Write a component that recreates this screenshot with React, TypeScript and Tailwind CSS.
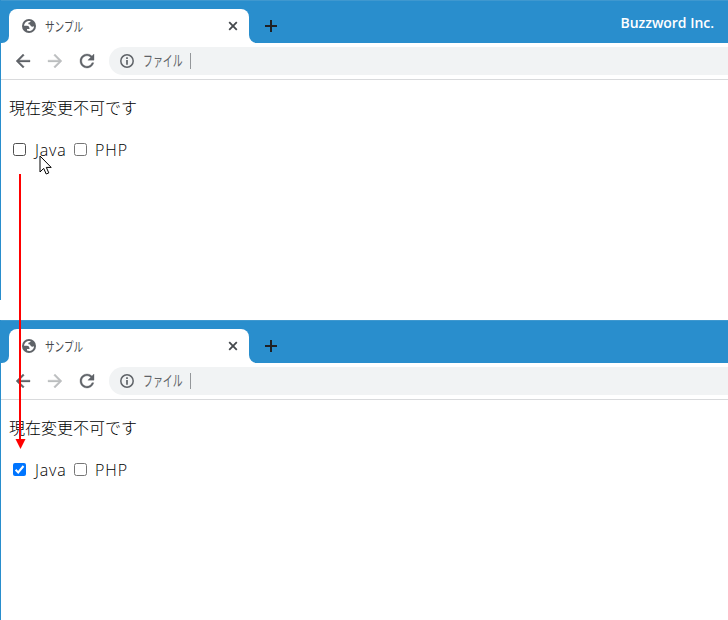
function Globe() {
  return (
    <svg width="14" height="14" viewBox="0 0 14 14" className="shrink-0">
      <circle cx="7" cy="7" r="7" fill="#5f6368" />
      <path
        d="M2 6.7 C2.1 4.4 3.7 2.4 6 1.9 L8.6 2.1 C8.4 3.2 7.7 3.5 6.4 3.7 V5.2 C8 5.2 8.5 5.8 8.7 7 C9.8 7.9 11 7.8 12 7.2 C12 9.7 10 11.9 7.2 12 L5 11.6 V10 H7.6 C7.5 7.9 6.6 6.7 5 6.7 Z"
        fill="#fff"
      />
    </svg>
  );
}

function BackIcon() {
  return (
    <svg width="14" height="14" viewBox="4 4 16 16" className="shrink-0 overflow-visible" fill="#5f6368" stroke="#5f6368" strokeWidth="0.4">
      <path d="M20 11H7.83l5.59-5.59L12 4l-8 8 8 8 1.41-1.41L7.83 13H20v-2z" />
    </svg>
  );
}

function ForwardIcon() {
  return (
    <svg width="14" height="14" viewBox="4 4 16 16" className="shrink-0 overflow-visible" fill="#bcbec0" stroke="#bcbec0" strokeWidth="0.4">
      <path d="M12 4l-1.41 1.41L16.17 11H4v2h12.17l-5.58 5.59L12 20l8-8z" />
    </svg>
  );
}

function ReloadIcon() {
  return (
    <svg width="14" height="14" viewBox="4 4 16 16" className="shrink-0 overflow-visible" fill="#5f6368" stroke="#5f6368" strokeWidth="0.4">
      <path d="M17.65 6.35C16.2 4.9 14.21 4 12 4c-4.42 0-7.99 3.58-7.99 8s3.57 8 7.99 8c3.73 0 6.84-2.55 7.73-6h-2.08c-.82 2.33-3.04 4-5.65 4-3.31 0-6-2.69-6-6s2.69-6 6-6c1.66 0 3.14.69 4.22 1.78L13 11h7V4l-2.35 2.35z" />
    </svg>
  );
}

function InfoIcon() {
  return (
    <svg width="14" height="14" viewBox="0 0 14 14" className="shrink-0">
      <circle cx="7" cy="7" r="6.2" fill="none" stroke="#5f6368" strokeWidth="1.5" />
      <path d="M7 3.3V4.9 M7 6.1V10.7" stroke="#5f6368" strokeWidth="1.7" />
    </svg>
  );
}

function TabStrip({ brand }: { brand?: string }) {
  return (
    <div className="flex h-[43px] border-t border-[#3f98cf] bg-[#298ecd]">
      <div className="flex w-2 shrink-0 bg-white">
        <div className="w-full rounded-br-[7px] bg-[#298ecd]" />
      </div>
      <div className="mt-2 flex w-60 shrink-0 items-center rounded-t-[8px] bg-white pl-[13px] pr-[11px]">
        <Globe />
        <span className="ml-[9px] w-[38px] whitespace-nowrap text-[13px] leading-4 text-[#45494d]">
          <span className="inline-block origin-left scale-x-[0.74]">サンプル</span>
        </span>
        <svg width="10" height="10" viewBox="0 0 10 10" className="ml-auto">
          <path d="M1.2 1.2 8.8 8.8 M8.8 1.2 1.2 8.8" stroke="#45494d" strokeWidth="1.8" />
        </svg>
      </div>
      <div className="flex grow bg-white">
        <div className="flex grow items-center justify-between rounded-bl-[8px] bg-[#298ecd] pl-4 pr-[14px]">
          <svg width="12" height="12" viewBox="0 0 12 12" className="mt-[8px]">
            <path d="M6 0V12 M0 6H12" stroke="#202124" strokeWidth="2" />
          </svg>
          {brand && (
            <span className="mt-[2px] whitespace-nowrap font-['Open_Sans','Noto_Sans',sans-serif] text-[14px] font-semibold leading-5 tracking-[-0.03px] text-white">
              {brand}
            </span>
          )}
        </div>
      </div>
    </div>
  );
}

function Toolbar() {
  return (
    <div className="flex h-[37px] items-center border-b border-[#d9dadc] pl-[15px]">
      <BackIcon />
      <span className="ml-[18px] flex">
        <ForwardIcon />
      </span>
      <span className="ml-[18px] flex">
        <ReloadIcon />
      </span>
      <div className="ml-[15px] flex h-7 grow items-center rounded-l-full bg-[#f1f3f4] pl-[11px]">
        <InfoIcon />
        <span className="-mt-[2px] ml-[9px] w-[40px] whitespace-nowrap text-[15px] leading-5 text-[#5f6368]">
          <span className="inline-block origin-left scale-x-[0.66]">ファイル</span>
        </span>
        <span className="ml-[7px] h-4 w-px bg-[#94979a]" />
      </div>
    </div>
  );
}

function Box({ checked, dark }: { checked?: boolean; dark?: boolean }) {
  if (checked) {
    return (
      <svg width="13" height="13" viewBox="0 0 13 13" className="shrink-0">
        <rect width="13" height="13" rx="2" fill="#0075ff" />
        <path d="M2.6 6.8 5.2 9.4 10.5 3" fill="none" stroke="#fff" strokeWidth="2" />
      </svg>
    );
  }
  return (
    <span
      className={`size-[13px] shrink-0 rounded-[2.5px] border bg-white ${dark ? "border-[#4f4f4f]" : "border-[#767676]"}`}
    />
  );
}

function BrowserWindow({ brand, javaChecked }: { brand?: string; javaChecked?: boolean }) {
  return (
    <section className="h-[300px] border-l border-[#298ecd] bg-white">
      <TabStrip brand={brand} />
      <Toolbar />
      <p className="ml-2 mt-[15px] whitespace-nowrap text-[16px] font-light leading-6 text-black">現在変更不可です</p>
      <div className="ml-3 mt-[18px] flex h-6 items-center text-[16px] font-light leading-6 text-black">
        <Box checked={javaChecked} dark />
        <span className="ml-[9px] mt-px w-[32px] whitespace-nowrap font-['Open_Sans','Noto_Sans',sans-serif] tracking-[0.8px]">
          Java
        </span>
        <span className="ml-[7px] flex">
          <Box />
        </span>
        <span className="ml-2 mt-px font-['Open_Sans','Noto_Sans',sans-serif] tracking-[1px]">PHP</span>
      </div>
    </section>
  );
}

export default function App() {
  return (
    <main className="relative flex h-[620px] w-[728px] flex-col gap-5 overflow-hidden bg-white font-['Noto_Sans_CJK_JP',sans-serif]">
      <BrowserWindow brand="Buzzword Inc." />
      <BrowserWindow javaChecked />
      <svg className="absolute left-[39px] top-[155px]" width="14" height="21" viewBox="0 0 14 21">
        <path
          d="M1 1V17L4.7 13.4 7.2 19 9.8 17.9 7.3 12.4H12.2Z"
          fill="#fff"
          stroke="#000"
          strokeWidth="1"
        />
      </svg>
      <svg className="absolute left-[14px] top-[174px]" width="12" height="276" viewBox="0 0 12 276">
        <path d="M6 0V267" stroke="#f00" strokeWidth="2" />
        <path d="M1.5 265H11.5L6.5 275Z" fill="#f00" />
      </svg>
    </main>
  );
}
